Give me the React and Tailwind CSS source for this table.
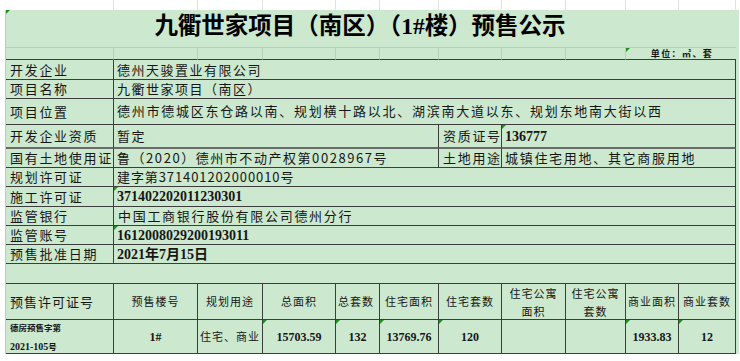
import React from "react";

const BD = "border-[#3d3d3d]";

function Mark() {
  return (
    <span className="absolute left-0 top-0 w-0 h-0 border-t-[4px] border-r-[4px] border-t-[#1f8f1f] border-r-transparent" />
  );
}

const serif = "font-['Liberation_Serif','Noto_Sans_CJK_SC',serif] font-bold tracking-normal";

function Label({ children }) {
  return (
    <div className="relative flex items-center pl-[4px] border-r border-b border-[#3d3d3d] text-[13px] tracking-[1.7px] whitespace-nowrap text-[#161616]">
      {children}
    </div>
  );
}

export default function App() {
  return (
    <div className="w-[740px] h-[361px] bg-white overflow-hidden font-['Noto_Sans_CJK_SC',sans-serif] text-[#161616]">
      {/* top header band */}
      <div className="h-[10px] ml-[6px] grid grid-cols-[108px_84px_65px_73px_44px_59px_63px_64px_60px_53px_57px]">
        <div className="border-r border-[#e2e2e2]" />
        <div className="border-r border-[#e2e2e2]" />
        <div className="border-r border-[#e2e2e2]" />
        <div className="border-r border-[#e2e2e2]" />
        <div className="border-r border-[#e2e2e2]" />
        <div className="border-r border-[#e2e2e2]" />
        <div className="border-r border-[#e2e2e2]" />
        <div className="border-r border-[#e2e2e2]" />
        <div className="border-r border-[#e2e2e2]" />
        <div className="border-r border-[#e2e2e2]" />
        <div className="border-r border-[#e2e2e2]" />
      </div>

      <div className="ml-[5px] w-[734px] bg-[#cce8cf] border-l border-[#c4c4c4]">
        <div className="w-[730px] grid grid-cols-[108px_84px_65px_73px_44px_59px_63px_64px_60px_53px_57px] grid-rows-[38px_12px_20px_19px_26px_24px_19px_19px_20px_19px_19px_19px_20px_36px_34px]">
          {/* title */}
          <div className="relative col-span-11 flex items-center justify-center pr-[22px] pb-[6px] border-b border-[#b7d0ba]">
            <Mark />
            <span className="text-[23.5px] font-bold tracking-[0px] text-black">
              九衢世家项目（南区）（<span className={serif + " text-[23.5px]"}>1#</span>楼）预售公示
            </span>
          </div>

          {/* unit row */}
          <div className={"border-r border-b border-r-[#b7d0ba] " + BD} />
          <div className={"border-r border-b border-r-[#b7d0ba] " + BD} />
          <div className={"border-r border-b border-r-[#b7d0ba] " + BD} />
          <div className={"border-r border-b border-r-[#b7d0ba] " + BD} />
          <div className={"border-r border-b border-r-[#b7d0ba] " + BD} />
          <div className={"border-r border-b border-r-[#b7d0ba] " + BD} />
          <div className={"border-r border-b border-r-[#b7d0ba] " + BD} />
          <div className={"border-r border-b border-r-[#b7d0ba] " + BD} />
          <div className={"border-r border-b border-r-[#b7d0ba] " + BD} />
          <div className={"relative col-span-2 flex items-center justify-center pl-[2px] border-b " + BD}>
            <Mark />
            <span className="text-[9px] font-bold tracking-[1.4px] leading-none">单位：㎡、套</span>
          </div>

          {/* row 1 */}
          <Label>开发企业</Label>
          <div className="relative col-span-10 flex items-center pl-[3px] border-r border-b border-[#3d3d3d] text-[13px] tracking-[1.5px] whitespace-nowrap">
            德州天骏置业有限公司
          </div>

          {/* row 2 */}
          <Label>项目名称</Label>
          <div className="relative col-span-10 flex items-center pl-[3px] border-r border-b border-[#3d3d3d] text-[13px] tracking-[1.5px] whitespace-nowrap">
            九衢世家项目（南区）
          </div>

          {/* row 3 */}
          <Label>项目位置</Label>
          <div className="relative col-span-10 flex items-center pl-[3px] pb-[2px] border-r border-b border-[#3d3d3d] text-[13px] tracking-[1.75px] whitespace-nowrap">
            德州市德城区东仓路以南、规划横十路以北、湖滨南大道以东、规划东地南大街以西
          </div>

          {/* row 4 */}
          <div className="relative flex items-center pl-[4px] border-r border-r-[#3d3d3d] border-b-2 border-b-[#6a6a6a] text-[13px] tracking-[1.7px] whitespace-nowrap">
            开发企业资质
          </div>
          <div className="relative col-span-5 flex items-center pl-[3px] border-r border-r-[#3d3d3d] border-b-2 border-b-[#6a6a6a] text-[13px] tracking-[1.5px] whitespace-nowrap">
            暂定
          </div>
          <div className="relative flex items-center pl-[4px] border-r border-r-[#3d3d3d] border-b-2 border-b-[#6a6a6a] text-[13px] tracking-[1.7px] whitespace-nowrap">
            资质证号
          </div>
          <div className="relative col-span-4 flex items-center pl-[3px] border-r border-r-[#3d3d3d] border-b-2 border-b-[#6a6a6a] whitespace-nowrap">
            <Mark />
            <span className={serif + " text-[14px]"}>136777</span>
          </div>

          {/* row 5 */}
          <Label>国有土地使用证</Label>
          <div className="relative col-span-5 flex items-center pl-[3px] border-r border-b border-[#3d3d3d] text-[13px] tracking-[1.55px] whitespace-nowrap">
            鲁（2020）德州市不动产权第0028967号
          </div>
          <Label>土地用途</Label>
          <div className="relative col-span-4 flex items-center pl-[3px] border-r border-b border-[#3d3d3d] text-[13px] tracking-[1.7px] whitespace-nowrap">
            城镇住宅用地、其它商服用地
          </div>

          {/* row 6 */}
          <Label>规划许可证</Label>
          <div className="relative col-span-10 flex items-center pl-[3px] border-r border-b border-[#3d3d3d] text-[13px] tracking-[0.9px] whitespace-nowrap">
            建字第371401202000010号
          </div>

          {/* row 7 */}
          <Label>施工许可证</Label>
          <div className="relative col-span-10 flex items-center pl-[3px] border-r border-b border-[#3d3d3d] whitespace-nowrap">
            <Mark />
            <span className={serif + " text-[14px]"}>371402202011230301</span>
          </div>

          {/* row 8 */}
          <Label>监管银行</Label>
          <div className="relative col-span-10 flex items-center pl-[4px] border-r border-b border-[#3d3d3d] text-[13px] tracking-[1.7px] whitespace-nowrap">
            中国工商银行股份有限公司德州分行
          </div>

          {/* row 9 */}
          <Label>监管账号</Label>
          <div className="relative col-span-10 flex items-center pl-[3px] border-r border-b border-[#3d3d3d] whitespace-nowrap">
            <Mark />
            <span className={serif + " text-[14px]"}>1612008029200193011</span>
          </div>

          {/* row 10 */}
          <Label>预售批准日期</Label>
          <div className="relative col-span-10 flex items-center pl-[3px] border-r border-b border-[#3d3d3d] whitespace-nowrap">
            <span className={serif + " text-[14px]"}>2021年7月15日</span>
          </div>

          {/* empty row */}
          <div className="col-span-11 border-r border-b border-[#3d3d3d]" />

          {/* header row */}
          <div className="flex items-center pl-[4px] border-r border-b border-[#3d3d3d] text-[13px] tracking-[1px] whitespace-nowrap">
            预售许可证号
          </div>
          <div className="flex items-center justify-center border-r border-b border-[#3d3d3d] text-[11px] tracking-[1px] whitespace-nowrap">
            预售楼号
          </div>
          <div className="flex items-center justify-center border-r border-b border-[#3d3d3d] text-[11px] tracking-[1px] whitespace-nowrap">
            规划用途
          </div>
          <div className="flex items-center justify-center border-r border-b border-[#3d3d3d] text-[11px] tracking-[1px] whitespace-nowrap">
            总面积
          </div>
          <div className="flex items-center justify-start pl-[2px] border-r border-b border-[#3d3d3d] text-[11px] tracking-[1px] whitespace-nowrap overflow-hidden">
            总套数
          </div>
          <div className="flex items-center justify-center border-r border-b border-[#3d3d3d] text-[11px] tracking-[1px] whitespace-nowrap">
            住宅面积
          </div>
          <div className="flex items-center justify-center border-r border-b border-[#3d3d3d] text-[11px] tracking-[1px] whitespace-nowrap">
            住宅套数
          </div>
          <div className="flex flex-col items-center justify-center border-r border-b border-[#3d3d3d] text-[11px] tracking-[1px] leading-[18px] whitespace-nowrap">
            <span>住宅公寓</span>
            <span>面积</span>
          </div>
          <div className="flex flex-col items-center justify-center border-r border-b border-[#3d3d3d] text-[11px] tracking-[1px] leading-[18px] whitespace-nowrap">
            <span>住宅公寓</span>
            <span>套数</span>
          </div>
          <div className="flex items-center justify-center border-r border-b border-[#3d3d3d] text-[11px] tracking-[1px] whitespace-nowrap">
            商业面积
          </div>
          <div className="flex items-center justify-center border-r border-b border-[#3d3d3d] text-[11px] tracking-[1px] whitespace-nowrap">
            商业套数
          </div>

          {/* data row */}
          <div className="flex flex-col justify-center pl-[4px] border-r border-b border-[#3d3d3d] leading-[19px] whitespace-nowrap">
            <span className="text-[8.5px] font-bold tracking-[0px]">德房预售字第</span>
            <span className="text-[8.5px] font-bold">
              <span className={serif + " text-[10px]"}>2021-105</span>号
            </span>
          </div>
          <div className="flex items-center justify-center border-r border-b border-[#3d3d3d]">
            <span className={serif + " text-[12px]"}>1#</span>
          </div>
          <div className="flex items-center justify-center border-r border-b border-[#3d3d3d] text-[11px] tracking-[1px] whitespace-nowrap">
            住宅、商业
          </div>
          <div className="relative flex items-center justify-center border-r border-b border-[#3d3d3d]">
            <Mark />
            <span className={serif + " text-[12px]"}>15703.59</span>
          </div>
          <div className="relative flex items-center justify-center border-r border-b border-[#3d3d3d]">
            <Mark />
            <span className={serif + " text-[12px]"}>132</span>
          </div>
          <div className="relative flex items-center justify-center border-r border-b border-[#3d3d3d]">
            <Mark />
            <span className={serif + " text-[12px]"}>13769.76</span>
          </div>
          <div className="relative flex items-center justify-center border-r border-b border-[#3d3d3d]">
            <Mark />
            <span className={serif + " text-[12px]"}>120</span>
          </div>
          <div className="border-r border-b border-[#3d3d3d]" />
          <div className="border-r border-b border-[#3d3d3d]" />
          <div className="relative flex items-center justify-center border-r border-b border-[#3d3d3d]">
            <Mark />
            <span className={serif + " text-[12px]"}>1933.83</span>
          </div>
          <div className="relative flex items-center justify-center border-r border-b border-[#3d3d3d]">
            <Mark />
            <span className={serif + " text-[12px]"}>12</span>
          </div>
        </div>
      </div>
    </div>
  );
}
